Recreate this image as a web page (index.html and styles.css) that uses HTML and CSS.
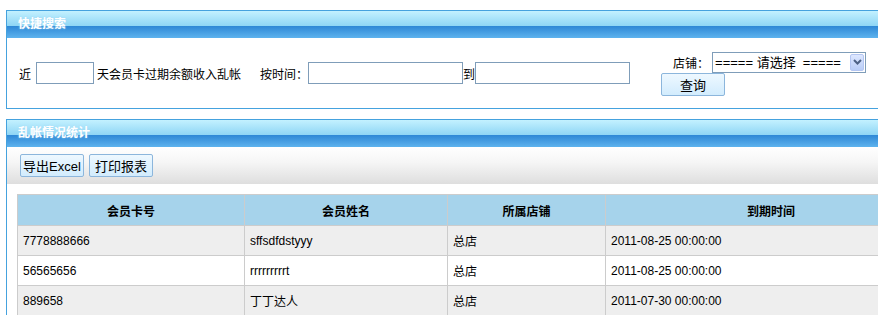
FILE: index.html
```html
<!DOCTYPE html>
<html lang="zh-CN">
<head>
  <meta charset="UTF-8">
  <title>乱帐情况统计</title>
  <link rel="stylesheet" href="styles.css">
</head>
<body>
  <div class="panel search-panel">
    <div class="panel-title">快捷搜索</div>
    <div class="search-body">
      <div class="search-left">
        <span>近</span>
        <input type="text" class="txt days">
        <span class="after-days">天会员卡过期余额收入乱帐</span>
        <span class="by-time">按时间：</span>
        <input type="text" class="txt date">
        <span>到</span>
        <input type="text" class="txt date">
      </div>
      <div class="search-right">
        <div class="shop-line">
          <span>店铺：</span>
          <div class="select-box">
            <select class="shop">
              <option>===== 请选择&nbsp; =====</option>
            </select>
            <span class="select-arrow">
              <svg width="9" height="6" viewBox="0 0 9 6"><path d="M1 1 L4.5 4.5 L8 1" fill="none" stroke="#4d6185" stroke-width="2"/></svg>
            </span>
          </div>
        </div>
        <button class="btn query">查询</button>
      </div>
    </div>
  </div>

  <div class="panel report-panel">
    <div class="panel-title">乱帐情况统计</div>
    <div class="toolbar">
      <button class="btn">导出Excel</button>
      <button class="btn">打印报表</button>
    </div>
    <div class="table-wrap">
      <table class="grid">
        <thead>
          <tr>
            <th class="c1">会员卡号</th>
            <th class="c2">会员姓名</th>
            <th class="c3">所属店铺</th>
            <th class="c4">到期时间</th>
          </tr>
        </thead>
        <tbody>
          <tr class="odd"><td>7778888666</td><td>sffsdfdstyyy</td><td>总店</td><td>2011-08-25 00:00:00</td></tr>
          <tr><td>56565656</td><td>rrrrrrrrrt</td><td>总店</td><td>2011-08-25 00:00:00</td></tr>
          <tr class="odd"><td>889658</td><td>丁丁达人</td><td>总店</td><td>2011-07-30 00:00:00</td></tr>
        </tbody>
      </table>
    </div>
  </div>
</body>
</html>
```

FILE: styles.css
```css
body
{
  margin: 0;
  padding: 10px 0 0 6px;
  font-family: "Liberation Sans", "Noto Sans CJK SC", sans-serif;
  font-size: 12px;
  color: #000;
  background: #fff;
  overflow: hidden;
}
.panel
{
  width: 940px;
  border: 1px solid #45a2de;
  border-right: none;
  margin-bottom: 10px;
}
.panel-title
{
  height: 27px;
  line-height: 26px;
  padding-left: 11px;
  color: #fff;
  font-weight: bold;
  text-shadow: 0 0 2px #9fd8f4;
  background: linear-gradient(#c3f1ff 0%, #8fd6f5 55%, #2e88d6 56%, #5eb3ee 100%);
}

/* search panel */
.search-body
{
  height: 70px;
  display: flex;
  align-items: center;
  padding-left: 12px;
}
.search-left
{
  display: flex;
  align-items: center;
}
.txt
{
  box-sizing: border-box;
  height: 22px;
  border: 1px solid #7f9db9;
  padding: 0 2px;
  margin: 0;
  font: inherit;
}
.days
{
  width: 58px;
  margin: 0 3px 0 5px;
}
.date
{
  width: 155px;
}
.by-time
{
  margin-left: 19px;
}
.search-right
{
  display: flex;
  flex-direction: column;
  align-items: flex-start;
  margin-left: 31px;
  margin-top: 1px;
}
.shop-line
{
  display: flex;
  align-items: center;
  padding-left: 12px;
}
.select-box
{
  position: relative;
  margin-left: 3px;
}
.shop
{
  box-sizing: border-box;
  width: 154px;
  height: 21px;
  border: 1px solid #7f9db9;
  background: #fff;
  font: inherit;
  font-size: 13px;
  padding: 0 0 0 2px;
  appearance: none;
  -webkit-appearance: none;
  color: #000;
}
.select-arrow
{
  position: absolute;
  top: 2px;
  right: 2px;
  width: 14px;
  height: 17px;
  box-sizing: border-box;
  border: 1px solid #b4c6f2;
  border-radius: 2px;
  background: linear-gradient(#dde7ff, #b9cdf7);
  display: flex;
  align-items: center;
  justify-content: center;
}
.btn
{
  height: 23px;
  padding: 0 2px;
  font: inherit;
  font-size: 13px;
  color: #000;
  border: 1px solid #8cb6dc;
  border-radius: 2px;
  background: linear-gradient(#eef8ff, #d2ecfd);
}
.query
{
  width: 64px;
}

/* report panel */
.toolbar
{
  height: 37px;
  display: flex;
  align-items: center;
  gap: 5px;
  padding-left: 13px;
  background: linear-gradient(#fff 0%, #f6f6f6 40%, #dedede 100%);
}
.toolbar .btn
{
  width: 64px;
  padding: 0;
}
.table-wrap
{
  padding: 10px 0 0 10px;
}
.grid
{
  border-collapse: collapse;
}
.grid th, .grid td
{
  border: 1px solid #cccccc;
  white-space: nowrap;
}
.grid th
{
  height: 30px;
  padding: 0;
  background: #a6d3eb;
  font-weight: bold;
  text-align: center;
}
.grid td
{
  height: 29px;
  padding: 0 5px;
  text-align: left;
}
.grid tr.odd td
{
  background: #eeeeee;
}
.c1 { width: 226px; }
.c2 { width: 202px; }
.c3 { width: 157px; }
.c4 { width: 330px; }
```
